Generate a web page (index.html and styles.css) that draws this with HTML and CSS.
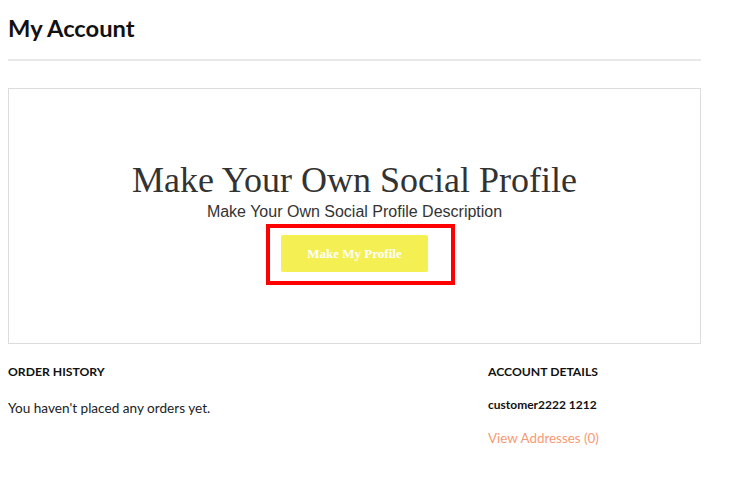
FILE: index.html
```html
<!DOCTYPE html>
<html>
<head>
<meta charset="utf-8">
<link rel="stylesheet" href="styles.css">
</head>
<body>
<div class="page">
  <h1 class="page-title">My Account</h1>
  <div class="divider"></div>
  <div class="promo">
    <h2 class="promo-title">Make Your Own Social Profile</h2>
    <p class="promo-desc">Make Your Own Social Profile Description</p>
    <div class="highlight">
      <a class="promo-btn" href="#">Make My Profile</a>
    </div>
  </div>
  <div class="columns">
    <div class="col-orders">
      <h3 class="col-title">ORDER HISTORY</h3>
      <p class="col-text">You haven't placed any orders yet.</p>
    </div>
    <div class="col-account">
      <h3 class="col-title">ACCOUNT DETAILS</h3>
      <p class="customer">customer2222 1212</p>
      <a class="addresses" href="#">View Addresses (0)</a>
    </div>
  </div>
</div>
</body>
</html>
```

FILE: styles.css
```css
body {
  margin: 8px;
  background: #fff;
  font-family: "Lato", "Liberation Sans", sans-serif;
  color: #111;
}
.page {
  width: 693px;
}
.page-title {
  margin: 0;
  padding-top: 5px;
  font-size: 23.7px;
  font-weight: 700;
  line-height: 30px;
  color: #111;
}
.divider {
  margin-top: 16px;
  height: 2px;
  background: #e8e8e8;
}
.promo {
  margin-top: 27px;
  border: 1px solid #dcdcdc;
  height: 256px;
  display: flex;
  flex-direction: column;
  align-items: center;
  box-sizing: border-box;
  padding-top: 71px;
}
.promo-title {
  margin: 0;
  font-family: "Liberation Serif", serif;
  font-weight: 400;
  font-size: 36px;
  line-height: 40px;
  color: #333;
}
.promo-desc {
  margin: 2px 0 0;
  font-family: "Liberation Sans", sans-serif;
  font-size: 16px;
  line-height: 20px;
  color: #333;
}
.highlight {
  margin-top: 2px;
  margin-left: 12px;
  border: 4px solid #ff0000;
  padding: 7px 23px 9px 11px;
}
.promo-btn {
  display: block;
  width: 147px;
  height: 37px;
  line-height: 37px;
  text-align: center;
  background: #f4ef53;
  border-radius: 2px;
  color: #fff;
  font-family: "Liberation Serif", serif;
  font-weight: 700;
  font-size: 13px;
  text-decoration: none;
}
.columns {
  display: flex;
  margin-top: 20px;
}
.col-orders {
  width: 480px;
}
.col-account {
  flex: 1;
}
.col-title {
  margin: 0;
  font-size: 12.2px;
  font-weight: 700;
  line-height: 16px;
  color: #111;
}
.col-text {
  margin: 20px 0 0;
  font-size: 13.6px;
  line-height: 16px;
  color: #222;
}
.customer {
  margin: 17px 0 0;
  font-size: 12px;
  font-weight: 700;
  line-height: 16px;
  color: #111;
}
.addresses {
  display: block;
  margin-top: 17px;
  font-size: 13.4px;
  line-height: 16px;
  color: #f79a74;
  text-decoration: none;
}
```
